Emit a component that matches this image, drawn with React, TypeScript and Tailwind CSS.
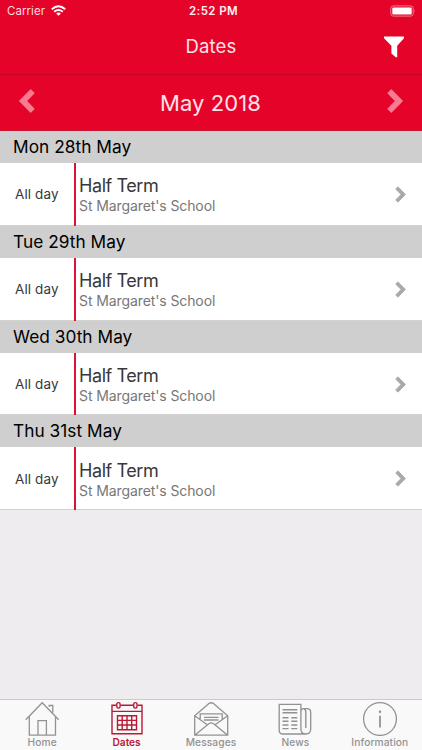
import type { ReactNode } from 'react';

const days = ['Mon 28th May', 'Tue 29th May', 'Wed 30th May', 'Thu 31st May'];

function Chevron({ className, left = false }: { className: string; left?: boolean }) {
  return (
    <svg viewBox="0 0 16 24" className={className} fill="currentColor" stroke="currentColor" strokeWidth="1.2" strokeLinejoin="round">
      <path d={left ? 'M11.7 .8 15 4.1 7.3 12 15 19.9 11.7 23.2.8 12z' : 'M4.3.8 1 4.1 8.7 12 1 19.9 4.3 23.2 15.2 12z'} />
    </svg>
  );
}

function EventDay({ date }: { date: string }) {
  return (
    <section className="h-[94.8px]">
      <h2 className="flex h-[32px] items-center bg-[#cfcfcf] pl-[13px] text-[17.3px] tracking-[0.03px] text-black">
        {date}
      </h2>
      <div className="flex h-[62.8px] border-b border-[#d2d2d2] bg-white">
        <div className="flex w-[74px] items-center pl-[15px] pt-[1px] text-[13.5px] tracking-[0.1px] text-[#383838]">All day</div>
        <div className="-mb-px w-[2px] bg-[#dc1238]" />
        <div className="flex flex-1 flex-col pl-[3px] pt-[12.3px]">
          <div className="text-[18px] leading-[22px] tracking-[-0.42px] text-[#383838]">Half Term</div>
          <div className="text-[14px] leading-[18px] tracking-[-0.1px] text-[#777]">St Margaret's School</div>
        </div>
        <Chevron className="mr-[16px] mt-[23px] h-[17px] w-[11px] text-[#a9a9a9]" />
      </div>
    </section>
  );
}

function Tab({ label, active = false, children }: { label: string; active?: boolean; children: ReactNode }) {
  return (
    <div className={`flex flex-1 flex-col items-center ${active ? 'text-[#b91935]' : 'text-[#929292]'}`}>
      <svg viewBox="0 0 36 36" className="h-[36px] w-[36px]" fill="none" stroke="currentColor" strokeWidth="1.3">
        {children}
      </svg>
      <span className={`text-[10.2px] leading-[12px] ${active ? 'font-semibold tracking-[-0.05px]' : 'font-medium tracking-[0.1px]'}`}>{label}</span>
    </div>
  );
}

export default function App() {
  return (
    <div className="flex h-[750px] w-[422px] flex-col overflow-hidden bg-[#eeecee] font-['Inter','Liberation_Sans',sans-serif]">
      <header className="h-[131px] shrink-0 border-b border-[#c31732] bg-[#e60329] text-white">
        <div className="grid h-[22px] grid-cols-3 items-center pl-[7px] pr-[5px]">
          <div className="flex items-center gap-[6px] text-[11.5px] tracking-[0.05px] text-[#ffdce2]">
            <span className="pt-px">Carrier</span>
            <svg viewBox="0 0 15 11" className="mb-px h-[11px] w-[15px]" fill="none" stroke="white" strokeWidth="2">
              <path d="M.8 4.2Q7.5-1.8 14.2 4.2M3.2 6.8q4.3-3.5 8.6 0" />
              <path d="M7.5 10.8 5.1 8.5q2.4-1.8 4.8 0z" fill="white" stroke="none" />
            </svg>
          </div>
          <div className="pl-[3px] pt-px text-center text-[11.5px] font-semibold tracking-[0.4px] text-[#fff0f2]">2:52 PM</div>
          <svg viewBox="0 0 26 12" className="mb-px mr-px h-[12px] w-[26px] justify-self-end">
            <rect x=".8" y=".9" width="22.4" height="10.2" rx="2.5" fill="none" stroke="#f17b8d" />
            <rect x="2.3" y="2.4" width="19.4" height="7.2" rx="1" fill="white" />
            <path d="M24.5 4.3q1.3 1.6 0 3.3z" fill="#f17b8d" />
          </svg>
        </div>
        <div className="flex h-[53px] items-center border-b border-[#c40629] pb-[3px]">
          <div className="w-[39px]" />
          <h1 className="flex-1 text-center text-[18.5px] tracking-[0.2px] text-[#ffe2e7]">Dates</h1>
          <svg viewBox="0 0 22 22" className="mr-[17px] h-[22px] w-[22px]" fill="white">
            <path d="M1 .5h20v1.8l-6.8 7.5v11.4h-1.4l-4.4-3.8V9.8L1 2.3z" />
          </svg>
        </div>
        <div className="flex h-[55px] items-center justify-between pl-[18.5px] pr-[19.5px]">
          <Chevron left className="mb-[3px] h-[24px] w-[16px] text-[#f87b91]" />
          <span className="pt-px text-[22px] tracking-[0.1px] text-[#ffe2e7]">May 2018</span>
          <Chevron className="mb-[3px] h-[24px] w-[16px] text-[#f87b91]" />
        </div>
      </header>
      <main className="flex-1">
        {days.map((date) => (
          <EventDay key={date} date={date} />
        ))}
      </main>
      <nav className="flex h-[51px] shrink-0 border-t border-[#cbc9cb] bg-[#f9f9f9]">
        <Tab label="Home">
          <path d="M1.7 19.8 18.2 2.8l16.5 17M5.3 16.8v18.4h26.2V16.8M14 35.2V20.7h8.4v14.5M25.2 6.7V5.5h3.6v7" />
        </Tab>
        <Tab label="Dates" active>
          <path d="M7.2 5.2H3v28.6h30V5.2h-4.2M11.5 5.2h13M3 11.4h30" strokeWidth="1.4" />
          <rect x="7.8" y="2.6" width="3.3" height="5.5" rx="1.5" strokeWidth="1.4" />
          <rect x="24.7" y="2.6" width="3.3" height="5.5" rx="1.5" strokeWidth="1.4" />
          <path d="M8.5 15.7h19v14h-19zM13.2 15.7v14M18 15.7v14M22.7 15.7v14M8.5 20.4h19M8.5 25h19" strokeWidth="1.4" />
        </Tab>
        <Tab label="Messages">
          <path d="M1.7 15.7v19.5h33V15.7L20.5 3.6q-2.3-1.7-4.6 0zM1.7 15.7l12.6 9M34.7 15.7l-12.6 9M1.7 35.2l14.1-11.4q2.4-1.8 4.8 0l14.1 11.4M7.2 19v-5.2h22V19M11 17.3h14.5M11 20h14.5" />
        </Tab>
        <Tab label="News">
          <path d="M23.9 30.5V4.3H2.2v25.9q0 3.8 3.8 3.8h22.9M23.9 9.5v19.3q0 5.2 4.8 5.2 5 0 5-5V12.5q0-3.8-3.8-3.8h-3.2q-2.8 0-2.8 3.5" />
          <path d="M28.8 28V12q0-3-2-3.3M5.5 9.8h14.8M5.5 12.7h14.8M5.5 17.7h6M14.3 17.7h6M5.5 21.3h6M14.3 21.3h6M5.5 25h6M14.3 25h6M5.5 28.6h6M14.3 28.6h6" strokeWidth="1.4" />
        </Tab>
        <Tab label="Information">
          <circle cx="18" cy="19" r="16.4" />
          <path d="M18 15.8v11.7" strokeWidth="1.8" />
          <circle cx="18" cy="11.8" r="1.25" fill="currentColor" stroke="none" />
        </Tab>
      </nav>
    </div>
  );
}
